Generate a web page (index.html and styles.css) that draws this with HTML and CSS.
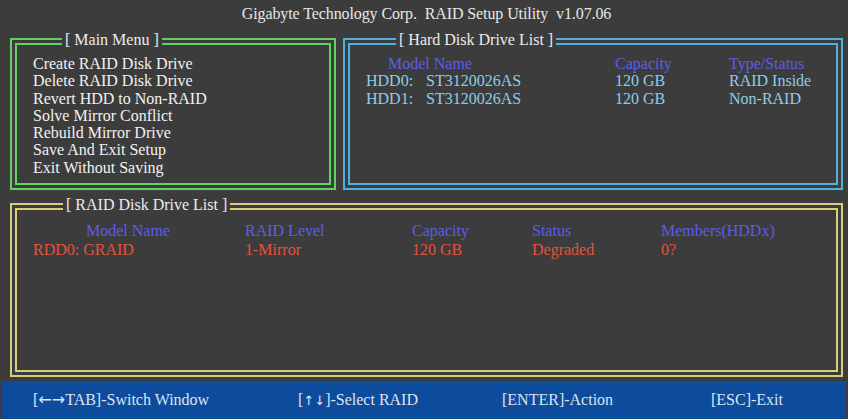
FILE: index.html
```html
<!DOCTYPE html>
<html lang="en">
<head>
    <meta charset="UTF-8">
    <title>RAID Setup Utility</title>
    <link rel="stylesheet" href="styles.css">
</head>
<body>
    <div class="screen">
        <div class="title">Gigabyte Technology Corp.&nbsp; RAID Setup Utility&nbsp; v1.07.06</div>

        <div class="top-row">
            <div class="panel green menu-panel">
                <span class="legend legend-menu">[ Main Menu ]</span>
                <div class="inner">
                    <ul class="menu">
                        <li>Create RAID Disk Drive</li>
                        <li>Delete RAID Disk Drive</li>
                        <li>Revert HDD to Non-RAID</li>
                        <li>Solve Mirror Conflict</li>
                        <li>Rebuild Mirror Drive</li>
                        <li>Save And Exit Setup</li>
                        <li>Exit Without Saving</li>
                    </ul>
                </div>
            </div>

            <div class="panel cyan hdd-panel">
                <span class="legend legend-hdd">[ Hard Disk Drive List ]</span>
                <div class="inner">
                    <div class="hdd-table">
                        <div class="head model-head">Model Name</div>
                        <div class="head">Capacity</div>
                        <div class="head">Type/Status</div>

                        <div><span class="hdd-id">HDD0:</span>ST3120026AS</div>
                        <div>120 GB</div>
                        <div>RAID Inside</div>

                        <div><span class="hdd-id">HDD1:</span>ST3120026AS</div>
                        <div>120 GB</div>
                        <div>Non-RAID</div>
                    </div>
                </div>
            </div>
        </div>

        <div class="panel yellow raid-panel">
            <span class="legend legend-raid">[ RAID Disk Drive List ]</span>
            <div class="inner">
                <div class="raid-table">
                    <div class="head model-head">Model Name</div>
                    <div class="head">RAID Level</div>
                    <div class="head">Capacity</div>
                    <div class="head">Status</div>
                    <div class="head">Members(HDDx)</div>

                    <div>RDD0: GRAID</div>
                    <div>1-Mirror</div>
                    <div>120 GB</div>
                    <div>Degraded</div>
                    <div>0?</div>
                </div>
            </div>
        </div>
    </div>

    <div class="footer">
        <span class="key key-tab">[<span class="arrow arrow-wide">&larr;&rarr;</span>TAB]-Switch Window</span>
        <span class="key key-sel">[<span class="arrow">&uarr;&darr;</span>]-Select RAID</span>
        <span class="key key-enter">[ENTER]-Action</span>
        <span class="key">[ESC]-Exit</span>
    </div>
</body>
</html>
```

FILE: styles.css
```css
/* BIOS style RAID utility screen */
body {
    margin: 0;
    width: 848px;
    height: 419px;
    background-color: #3c3c3c;
    font-family: "Liberation Serif", "Times New Roman", serif;
    font-size: 16px;
    color: #ececec;
    overflow: hidden;
}

.screen {
    padding: 0 5px 0 10px;
    height: 381px;
}

.title {
    height: 38px;
    line-height: 28px;
    text-align: center;
    font-size: 16px;
    letter-spacing: -0.1px;
    color: #e8e8e8;
}

.top-row {
    display: flex;
    gap: 7px;
}

.panel {
    position: relative;
    border: 2px solid;
    padding: 3px;
}

.inner {
    border: 2px solid;
    height: 100%;
    box-sizing: border-box;
}

.green { border-color: #62d062; }
.green .inner { border-color: #62d062; }
.cyan { border-color: #4fb2da; }
.cyan .inner { border-color: #4fb2da; }
.yellow { border-color: #d6d07a; }
.yellow .inner { border-color: #d6d07a; }

.menu-panel {
    width: 316px;
    height: 142px;
    flex-shrink: 0;
}

.hdd-panel {
    width: 490px;
    height: 142px;
    flex-shrink: 0;
}

.raid-panel {
    width: 823px;
    height: 164px;
    margin-top: 13px;
}

.legend {
    position: absolute;
    top: -9px;
    background-color: #3c3c3c;
    line-height: 18px;
    padding: 0 3px;
    color: #ececec;
}

.legend-menu { left: 50px; }
.legend-hdd { left: 51px; }
.legend-raid { left: 51px; }

.menu {
    list-style: none;
    margin: 0;
    padding: 10px 0 0 16px;
    line-height: 17.3px;
    color: #f2f2f2;
}

.head {
    color: #5c5ce8;
}

.hdd-table {
    display: grid;
    grid-template-columns: 249px 114px auto;
    padding: 10px 0 0 16px;
    line-height: 17.3px;
    color: #90cce6;
}

.hdd-table .model-head {
    padding-left: 22px;
}

.hdd-id {
    display: inline-block;
    width: 60px;
}

.raid-table {
    display: grid;
    grid-template-columns: 212px 167px 120px 129px auto;
    padding: 12px 0 0 16px;
    line-height: 18.5px;
    color: #e2533b;
}

.raid-table .model-head {
    padding-left: 53px;
}

.footer {
    margin: 0 2px;
    height: 38px;
    background-color: #0d4c9d;
    display: flex;
    align-items: center;
    padding-left: 31px;
    color: #dde3ef;
}

.arrow {
    font-family: "DejaVu Sans", sans-serif;
    font-size: 13px;
    line-height: 1;
}

.arrow-wide {
    font-size: 16px;
}

.key-tab { width: 265px; }
.key-sel { width: 204px; }
.key-enter { width: 209px; }
```
